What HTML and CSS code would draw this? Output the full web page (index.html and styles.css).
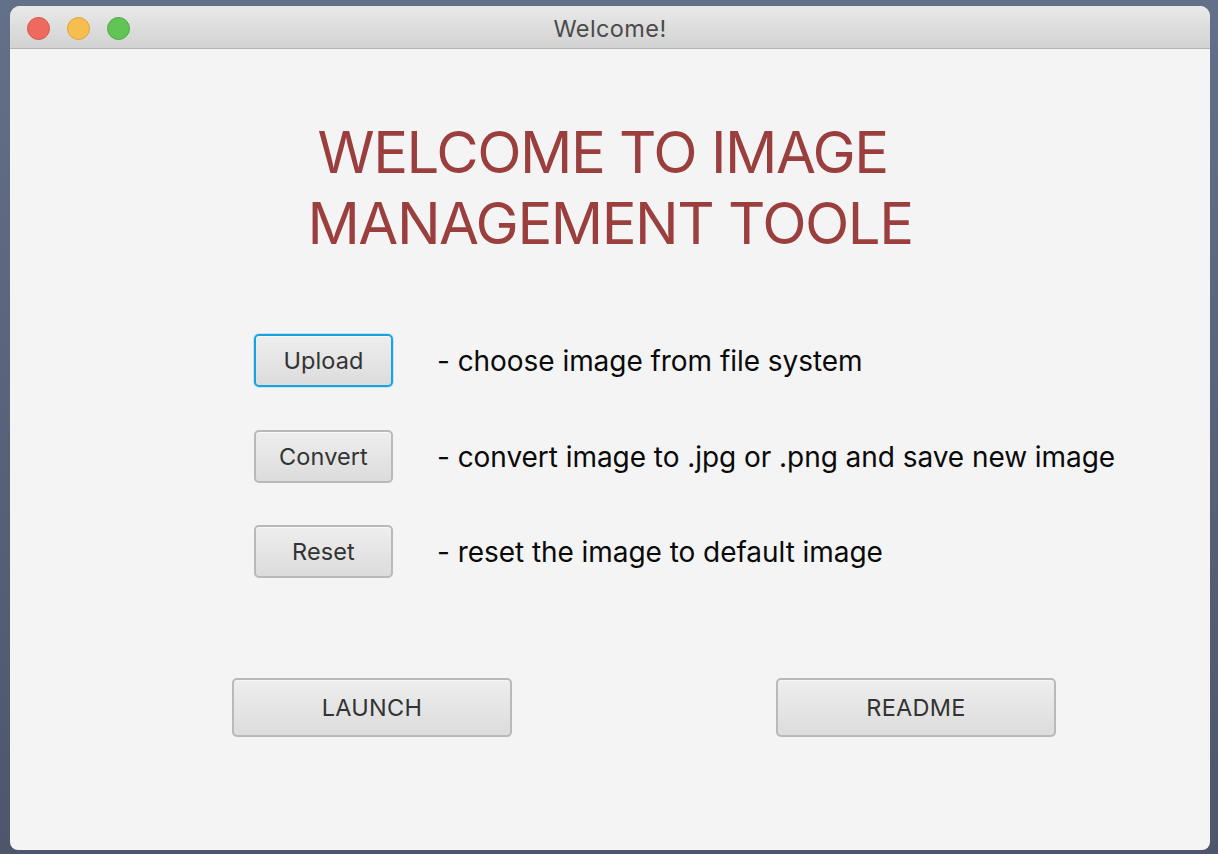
FILE: index.html
```html
<!DOCTYPE html>
<html>
<head>
<meta charset="utf-8">
<title>Welcome!</title>
<link rel="stylesheet" href="styles.css">
</head>
<body>
<div class="window">
  <div class="titlebar">
    <div class="lights">
      <span class="light red"></span>
      <span class="light yellow"></span>
      <span class="light green"></span>
    </div>
    <div class="title">Welcome!</div>
  </div>
  <div class="content">
    <h1 class="heading">WELCOME TO IMAGE&nbsp;<br>MANAGEMENT TOOLE</h1>
    <div class="actions">
      <div class="row">
        <button class="btn small focused">Upload</button>
        <span class="desc">- choose image from file system</span>
      </div>
      <div class="row">
        <button class="btn small">Convert</button>
        <span class="desc">- convert image to .jpg or .png and save new image</span>
      </div>
      <div class="row">
        <button class="btn small">Reset</button>
        <span class="desc">- reset the image to default image</span>
      </div>
    </div>
    <div class="bottom">
      <button class="btn large">LAUNCH</button>
      <button class="btn large">README</button>
    </div>
  </div>
</div>
</body>
</html>
```
FILE: styles.css
```css
html, body {
  margin: 0;
  padding: 0;
}
body {
  width: 1218px;
  height: 854px;
  background: linear-gradient(#627089, #4d566b);
  overflow: hidden;
  font-family: Inter, "Liberation Sans", sans-serif;
}
.window {
  margin: 6px 0 0 10px;
  width: 1200px;
  height: 844px;
  border-radius: 10px 10px 8px 8px;
  background: #f4f4f4;
  overflow: hidden;
  display: flex;
  flex-direction: column;
}
.titlebar {
  position: relative;
  height: 42px;
  flex: none;
  background: linear-gradient(#e9e9e9, #d2d2d2);
  border-bottom: 1px solid #b4b4b4;
  display: flex;
  align-items: center;
  justify-content: center;
}
.lights {
  position: absolute;
  left: 17px;
  top: 11px;
  display: flex;
  gap: 17px;
}
.light {
  width: 23px;
  height: 23px;
  border-radius: 50%;
  box-sizing: border-box;
}
.red { background: #ee6a5f; border: 1px solid #d9544a; }
.yellow { background: #f6be4f; border: 1px solid #dea23b; }
.green { background: #61c454; border: 1px solid #4ead42; }
.title {
  font-size: 23.5px;
  color: #4b4b4b;
  letter-spacing: 0.4px;
  margin-top: 3px;
}
.content {
  flex: 1;
  display: flex;
  flex-direction: column;
}
.heading {
  margin: 68px 0 0 0;
  font-size: 58px;
  line-height: 71px;
  font-weight: 400;
  color: #9b3e3e;
  text-align: center;
  letter-spacing: -1.5px;
}
.actions {
  margin-top: 75px;
  padding-left: 244px;
  display: flex;
  flex-direction: column;
  gap: 43px;
}
.row {
  display: flex;
  align-items: center;
  gap: 44px;
}
.row:last-child {
  margin-top: -1px;
}
.btn {
  font-family: Inter, "Liberation Sans", sans-serif;
  color: #333;
  background: linear-gradient(#eeeeee, #dcdcdc);
  border: 2px solid #b9b9b9;
  border-radius: 5px;
  box-sizing: border-box;
  padding: 0;
  box-shadow: inset 0 1px 0 #f8f8f8;
}
.small {
  width: 139px;
  height: 53px;
  font-size: 23.5px;
  letter-spacing: 0.1px;
}
.focused {
  border-color: #19a2de;
  box-shadow: 0 0 0 1px #c4e5f4, inset 0 1px 0 #f8f8f8;
}
.desc {
  font-size: 28px;
  color: #0a0a0a;
  letter-spacing: -0.05px;
}
.bottom {
  margin-top: 100px;
  padding-left: 222px;
  display: flex;
  gap: 264px;
}
.large {
  width: 280px;
  height: 59px;
  font-size: 23.5px;
  letter-spacing: 0.3px;
}
```
